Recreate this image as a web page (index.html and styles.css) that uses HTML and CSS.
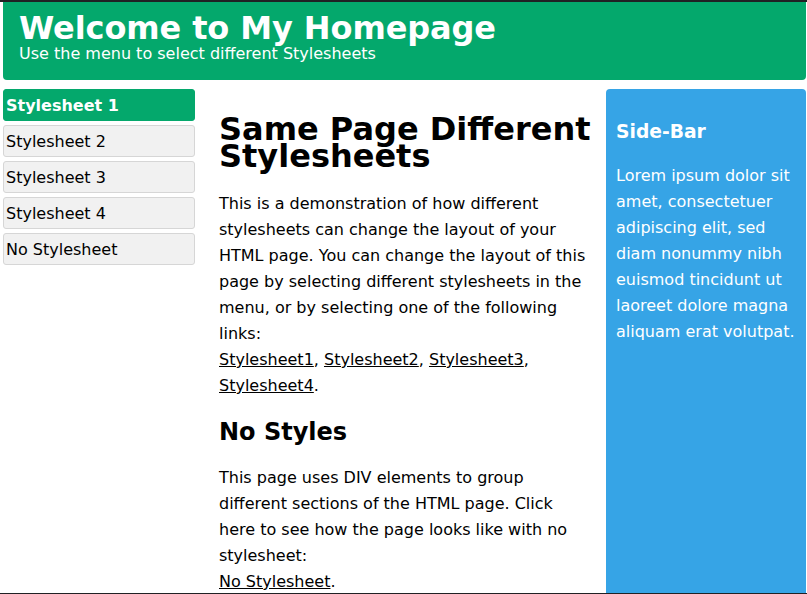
FILE: index.html
```html
<!DOCTYPE html>
<html lang="en">
<head>
<meta charset="utf-8">
<title>Same Page Different Stylesheets</title>
<link rel="stylesheet" href="styles.css">
</head>
<body>
<div class="frame">
  <div class="header">
    <h1 class="site-title">Welcome to My Homepage</h1>
    <p class="site-sub">Use the menu to select different Stylesheets</p>
  </div>
  <div class="layout">
    <div class="menu">
      <a class="menu-item active" href="#">Stylesheet 1</a>
      <a class="menu-item" href="#">Stylesheet 2</a>
      <a class="menu-item" href="#">Stylesheet 3</a>
      <a class="menu-item" href="#">Stylesheet 4</a>
      <a class="menu-item" href="#">No Stylesheet</a>
    </div>
    <div class="main">
      <h1 class="main-title">Same Page Different Stylesheets</h1>
      <p class="text">This is a demonstration of how different stylesheets can change the layout of your HTML page. You can change the layout of this page by selecting different stylesheets in the menu, or by selecting one of the following links:<br><a href="#">Stylesheet1</a>, <a href="#">Stylesheet2</a>, <a href="#">Stylesheet3</a>, <a href="#">Stylesheet4</a>.</p>
      <h2 class="sub-title">No Styles</h2>
      <p class="text text-tight">This page uses DIV elements to group different sections of the HTML page. Click here to see how the page looks like with no stylesheet:<br><a href="#">No Stylesheet</a>.</p>
    </div>
    <div class="sidebar">
      <h3 class="side-title">Side-Bar</h3>
      <p class="side-text">Lorem ipsum dolor sit amet, consectetuer adipiscing elit, sed diam nonummy nibh euismod tincidunt ut laoreet dolore magna aliquam erat volutpat.</p>
    </div>
  </div>
</div>
</body>
</html>
```
FILE: styles.css
```css
html, body {
  margin: 0;
  padding: 0;
}
body {
  background: #202124;
  padding-top: 2px;
  padding-bottom: 1px;
  font-family: "DejaVu Sans", Verdana, sans-serif;
  font-size: 16px;
  color: #000;
}
.frame {
  background: #fff;
  height: 591px;
  overflow: hidden;
}
.header {
  background: #04a86c;
  color: #fff;
  margin: 0 1px 0 3px;
  height: 78px;
  box-sizing: border-box;
  padding: 10px 16px 0 16px;
  border-radius: 0 0 4px 4px;
}
.site-title {
  margin: 0;
  font-size: 32px;
  line-height: 33px;
  font-weight: bold;
  letter-spacing: -0.1px;
}
.site-sub {
  margin: 0;
  font-size: 16px;
  line-height: 18px;
}
.layout {
  display: flex;
  align-items: flex-start;
  margin-top: 9px;
}
.menu {
  width: 192px;
  margin-left: 3px;
  display: flex;
  flex-direction: column;
  gap: 4px;
}
.menu-item {
  display: block;
  height: 32px;
  box-sizing: border-box;
  line-height: 30px;
  padding: 1px 2px 0 2px;
  background: #f1f1f1;
  border: 1px solid #d6d6d6;
  border-radius: 3px;
  color: #000;
  text-decoration: none;
}
.menu-item.active {
  background: #04a86c;
  border-color: #04a86c;
  color: #fff;
  font-weight: bold;
}
.main {
  width: 372px;
  padding: 0 15px 0 24px;
}
.main-title {
  margin: 27px 0 0 0;
  font-size: 32px;
  line-height: 27px;
  font-weight: bold;
}
.text {
  margin: 21px 0 0 0;
  line-height: 26px;
}
.text a {
  color: #000;
}
.sub-title {
  margin: 18px 0 0 0;
  font-size: 24px;
  line-height: 30px;
}
.text-tight {
  margin-top: 18px;
}
.sidebar {
  width: 200px;
  height: 520px;
  box-sizing: border-box;
  background: #36a4e6;
  color: #fff;
  padding: 0 10px;
  border-radius: 4px 4px 0 0;
}
.side-title {
  margin: 32px 0 0 0;
  font-size: 18.72px;
  line-height: 22px;
}
.side-text {
  margin: 20px 0 0 0;
  line-height: 26px;
}
```
